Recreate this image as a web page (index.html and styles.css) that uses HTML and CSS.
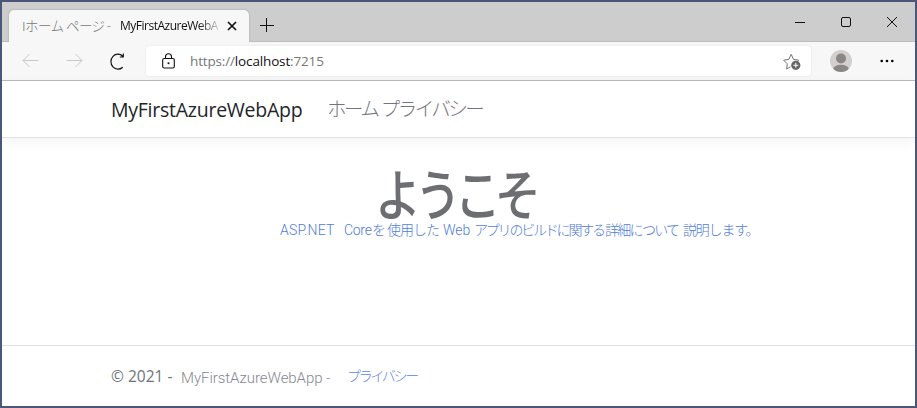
FILE: index.html
```html
<!DOCTYPE html>
<html lang="ja">
<head>
<meta charset="utf-8">
<title>ホーム ページ - MyFirstAzureWebApp</title>
<link rel="stylesheet" href="styles.css">
</head>
<body>
<div class="window">
  <div class="titlebar">
    <div class="tab">
      <span class="tab-ja">Iホーム ページ -</span>
      <span class="tab-name">MyFirstAzureWebA</span>
      <svg class="tab-close" width="10" height="10" viewBox="0 0 10 10"><path d="M1 1l8 8M9 1L1 9"/></svg>
    </div>
    <svg class="new-tab" width="14" height="14" viewBox="0 0 14 14"><path d="M6.500 0v14M0 7.500h14"/></svg>
    <div class="controls">
      <svg width="10" height="10" viewBox="0 0 10 10"><path d="M0 5.500h10"/></svg>
      <svg width="10" height="10" viewBox="0 0 10 10"><rect x=".5" y=".5" width="9" height="9" rx="1.500"/></svg>
      <svg width="10" height="10" viewBox="0 0 10 10"><path d="M0 0l10 10M10 0L0 10"/></svg>
    </div>
  </div>
  <div class="toolbar">
    <svg class="back" width="17" height="14" viewBox="0 0 17 14"><path d="M16.500 6.500H1M7.500 0L1 6.500l6.500 6.500"/></svg>
    <svg class="forward" width="17" height="14" viewBox="0 0 17 14"><path d="M.5 6.500H16M9.500 0L16 6.500l-6.500 6.500"/></svg>
    <svg class="reload" width="15" height="17" viewBox="0 0 15 17"><path d="M12.700 14.200A7 7.500 0 1 1 12.800 3.300M13.300 .5v3.500H9.800"/></svg>
    <div class="address">
      <svg class="lock" width="13" height="16" viewBox="0 0 13 16"><rect x=".7" y="5.500" width="11.600" height="9.500" rx="1.500"/><path d="M3.500 5.500V3.800a3 3 0 0 1 6 0v1.700"/><circle cx="6.500" cy="10.300" r=".5"/></svg>
      <span class="url">https://<b>localhost</b>:7215</span>
      <svg class="star" width="18" height="17" viewBox="0 0 18 17"><path d="M7.500 13.800L3.600 16 4.300 10.800 .7 7.200 5.800 6.400 8.200 1.300 10.500 6.400 15.700 7.200 14.500 8.500"/><circle cx="12.800" cy="12.300" r="4.600"/><path class="plus" d="M12.800 9.800v5M10.300 12.300h5"/></svg>
    </div>
    <svg class="avatar" width="22" height="22" viewBox="0 0 22 22"><defs><clipPath id="round"><circle cx="11" cy="11" r="11"/></clipPath></defs><g clip-path="url(#round)"><path fill="#d2d0ce" d="M0 0h22v22H0z"/><circle cx="11" cy="8.500" r="5"/><ellipse cx="11" cy="19.800" rx="8" ry="5"/></g></svg>
    <svg class="more" width="14" height="4" viewBox="0 0 14 4"><circle cx="1.700" cy="2" r="1.300"/><circle cx="7" cy="2" r="1.300"/><circle cx="12.300" cy="2" r="1.300"/></svg>
  </div>
  <header class="navbar">
    <span class="brand">MyFirstAzureWebApp</span>
    <span class="nav-links">ホーム プライバシー</span>
  </header>
  <main>
    <h1>ようこそ</h1>
    <p class="intro"><span class="asp">ASP.NET</span><span class="core">Core</span><span class="wo">を</span><span class="use">使用した</span><span class="web">Web</span><span class="build">アプリのビルドに関する</span><span class="detail">詳細について</span><span class="explain">説明します。</span></p>
  </main>
  <footer>
    <span class="copyright">© 2021 -</span>
    <span class="app-name">MyFirstAzureWebApp -</span>
    <span class="privacy">プライバシー</span>
  </footer>
</div>
</body>
</html>
```
FILE: styles.css
```css
* { box-sizing: border-box; }
body { margin: 0; font-family: "Open Sans", "Noto Sans CJK JP", sans-serif; }
svg { display: block; flex: none; fill: none; stroke: #111; stroke-width: 1; }
span { flex: none; white-space: nowrap; }
.window { width: 917px; height: 408px; border: 2px solid #4b5679; background: #fff; overflow: hidden; display: flex; flex-direction: column; }
.titlebar { height: 40px; flex: none; display: flex; background: #cdcdcd; border-bottom: 1px solid #bcbcbc; }
.tab { width: 240px; height: 32px; margin: 8px 0 0 7px; padding-left: 13px; display: flex; align-items: center; background: #f7f7f7; border-radius: 5px 5px 0 0; box-shadow: 0 0 2px #999; clip-path: inset(-3px -3px 0 -3px); }
.tab-ja { width: 98px; margin-top: -2px; font: 300 13.5px "Roboto", "Noto Sans CJK JP", sans-serif; color: #777; letter-spacing: -.6px; }
.tab-name { width: 98px; margin-top: -1px; font-size: 12px; letter-spacing: -.5px; overflow: hidden; background: linear-gradient(90deg, #111 80%, #ccc); background-clip: text; color: transparent; }
.tab-close { margin-left: 9px; stroke-width: 1.7; }
.new-tab { margin: 16px 0 0 11px; stroke-width: 1; }
.controls { display: flex; gap: 36px; margin: 15px 18px 0 auto; }
.toolbar { height: 39px; flex: none; display: flex; align-items: center; background: #f7f7f7; border-bottom: 1px solid #b9b9b9; }
.back { margin-left: 20px; stroke: #c8c8c8; }
.forward { margin-left: 27px; stroke: #c8c8c8; }
.reload { margin-left: 27px; stroke-width: 1.2; }
.address { width: 665px; height: 30px; margin-left: 21px; padding: 0 10px 0 16px; display: flex; align-items: center; background: #fff; border-radius: 4px; box-shadow: 0 0 3px #e5e5e5; }
.lock { stroke-width: 1.1; }
.url { margin-left: 15px; color: #777; font-size: 13.5px; letter-spacing: -.15px; }
.url b { color: #111; font-weight: 400; }
.star { margin-left: auto; stroke: #737373; }
.star circle { fill: #666; stroke: none; }
.star .plus { stroke: #fff; }
.avatar { margin-left: 19px; fill: #8a8683; stroke: none; }
.more { margin-left: 28px; fill: #000; stroke: none; }
.navbar { height: 57px; flex: none; display: flex; align-items: center; padding-left: 109px; border-bottom: 1px solid #dee2e6; box-shadow: 0 4px 12px rgba(0, 0, 0, .05); }
.brand { width: 216px; color: #212529; font-size: 19.5px; letter-spacing: -.25px; }
.nav-links { color: #77737d; margin-top: -3px; font: 300 19.5px "Noto Sans CJK JP", sans-serif; letter-spacing: -2.5px; word-spacing: 1.5px; }
main { height: 207px; flex: none; }
h1 { width: 210px; height: 82px; margin: 0 0 0 373px; padding-top: 28px; color: #6d6e71; font: 500 55px/50px "Noto Sans CJK JP", sans-serif; letter-spacing: -7.5px; white-space: nowrap; transform: scaleX(.84); transform-origin: left; }
.intro { margin: 0 0 0 278px; display: flex; align-items: center; height: 20px; color: #4f7cdb; font: 300 14px/16px "Roboto", "Noto Sans CJK JP", sans-serif; }
.asp { width: 64px; letter-spacing: .2px; }
.core { width: 28px; letter-spacing: -.3px; }
.wo { width: 15px; }
.use { width: 56px; letter-spacing: -1px; }
.web { width: 31px; }
.build { width: 131px; letter-spacing: -2.2px; }
.detail { width: 78px; letter-spacing: -1.7px; }
.explain { letter-spacing: -1.2px; }
footer { flex: 1; display: flex; align-items: center; padding-left: 109px; border-top: 1px solid #dfdfdf; }
.copyright { width: 70px; color: #6c757d; font-size: 15.5px; }
.app-name { width: 166px; margin-top: 3px; color: #858792; font: 300 15px "Roboto", sans-serif; letter-spacing: -.05px; }
.privacy { margin-top: -2px; color: #5b84ed; font: 300 14px "Noto Sans CJK JP", sans-serif; letter-spacing: -2.3px; }
```
